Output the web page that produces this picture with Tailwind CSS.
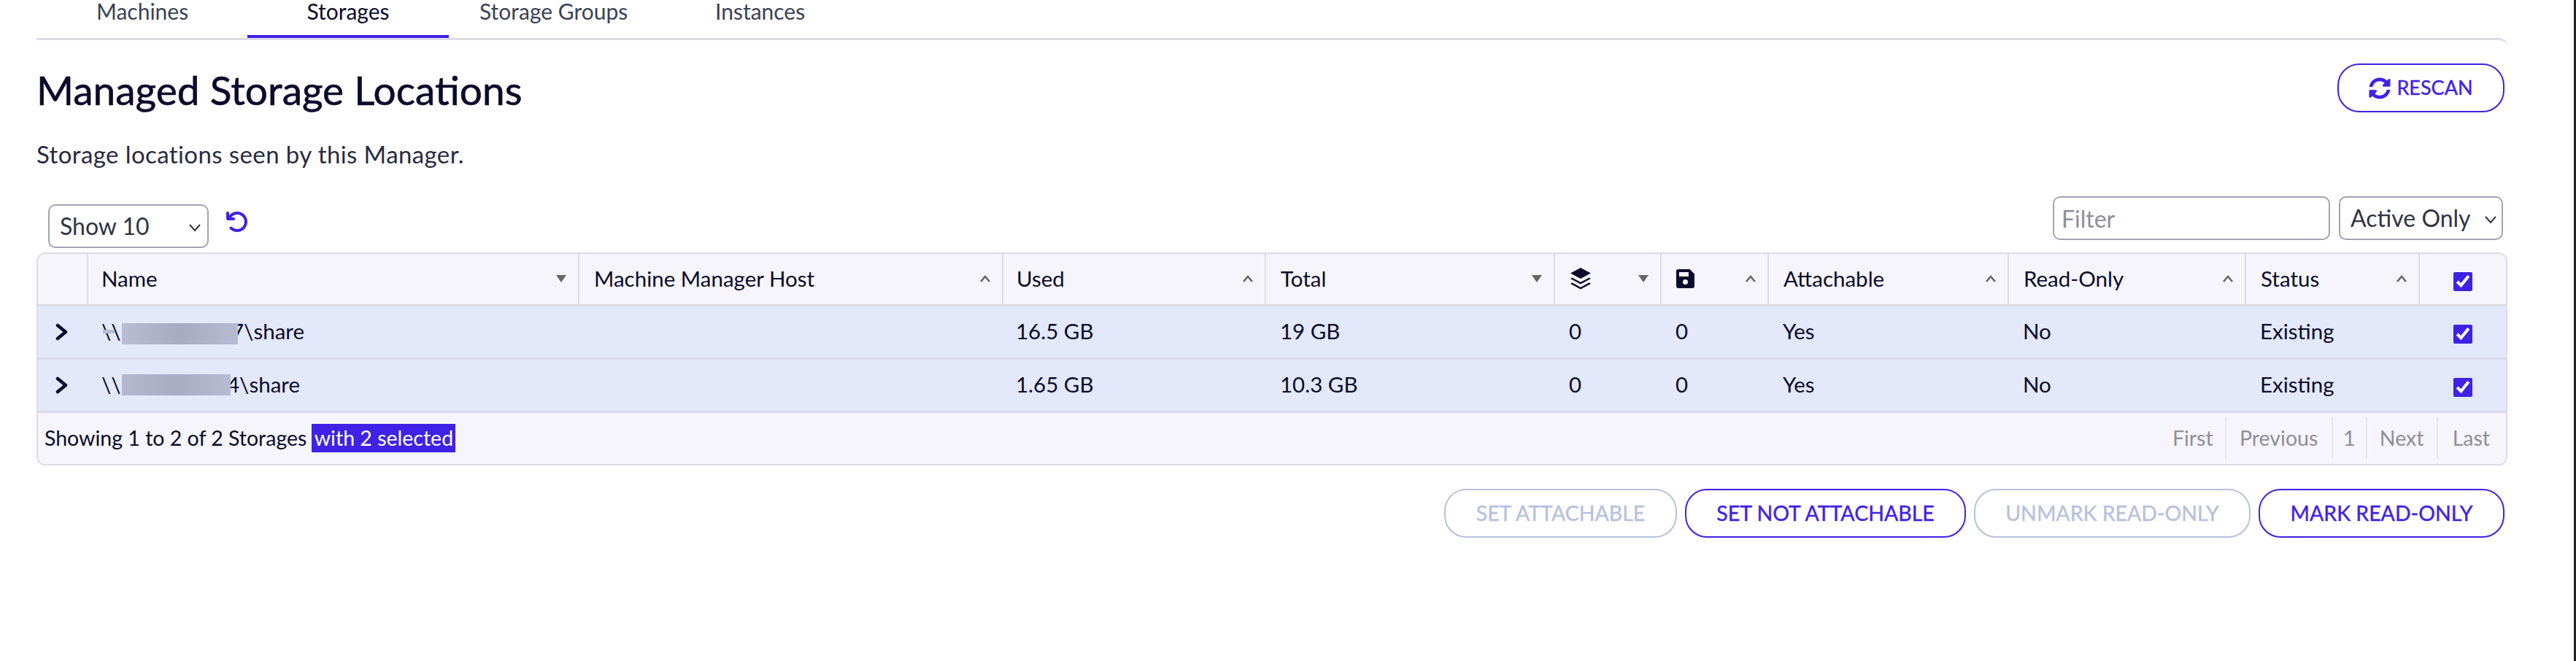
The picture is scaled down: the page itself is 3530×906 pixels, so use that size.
<!DOCTYPE html>
<html lang="en">

<head>
    <meta charset="UTF-8">
    <title>Storages</title>
    <script src="https://cdn.jsdelivr.net/npm/@tailwindcss/browser@4"></script>
</head>

<body class="bg-white text-[#0b0b2b] [font-family:Lato,sans-serif] overflow-hidden">
    <div class="h-[906px] w-[3530px] border-r-[3px] border-[#222] pl-[50px] pr-[91px]">
        <!-- tabs -->
        <nav class="flex h-[52px] text-[30px] leading-[30px] text-[#3a4256]">
            <a class="w-[150px] pl-[82px] whitespace-nowrap">Machines</a>
            <a class="ml-[139px] w-[276px] h-[52px] border-b-4 border-[#3f22e5] text-center text-[#0b0b2b] whitespace-nowrap">Storages</a>
            <a class="ml-[42px] w-[253px] whitespace-nowrap">Storage Groups</a>
            <a class="ml-[70px] whitespace-nowrap">Instances</a>
        </nav>

        <section class="rounded-tr-[12px] border-t-[3px] border-[#dcdce6]">
            <!-- title -->
            <div class="flex items-start justify-between pt-[32px]">
                <h1 class="text-[55px] leading-[72px] [-webkit-text-stroke:0.6px_currentColor]">Managed Storage Locations</h1>
                <button class="mr-[4px] flex h-[67px] w-[229px] items-center justify-center gap-[8px] rounded-[30px] border-2 border-[#3f22e5] text-[27px] text-[#3f22e5] [-webkit-text-stroke:0.4px_currentColor]">
                    <svg class="h-[30px] w-[30px]" viewBox="0 0 512 512" fill="currentColor"><path d="M370.7 133.3C339.5 104 298.9 88 255.8 88c-77.5.1-144.3 53.2-162.8 126.9-1.3 5.4-6.1 9.1-11.6 9.1H24.1c-7.5 0-13.2-6.8-11.8-14.2C33.9 94.9 134.8 8 256 8c66.4 0 126.8 26.1 171.3 68.7L463 41c15.1-15.1 41-4.4 41 17v134c0 13.3-10.7 24-24 24H346c-21.4 0-32.1-25.9-17-41zM32 296h134c21.4 0 32.1 25.9 17 41l-41.8 41.8c31.3 29.3 71.8 45.3 114.9 45.2 77.4-.1 144.3-53.1 162.8-126.8 1.3-5.4 6.1-9.1 11.6-9.1h57.3c7.5 0 13.2 6.8 11.8 14.2C478.1 417.1 377.2 504 256 504c-66.4 0-126.8-26.1-171.3-68.7L49 471c-15.1 15.1-41 4.4-41-17V320c0-13.3 10.7-24 24-24z"/></svg>
                    RESCAN
                </button>
            </div>
            <p class="mt-[33px] text-[33px] leading-[38px] tracking-[0.4px] text-[#2a2a44]">Storage locations seen by this Manager.</p>

            <!-- table controls -->
            <div class="flex items-start justify-between mt-[39px] h-[77px]">
                <div class="flex items-start pl-[16px] pt-[11px]">
                    <div class="relative flex h-[60px] w-[220px] items-center rounded-[10px] border-2 border-[#a3a3b2] pl-[14px] text-[32px] text-[#2f3545]">
                        Show 10
                        <svg class="absolute right-[8px] top-[24px] h-[12px] w-[18px]" viewBox="0 0 18 12" fill="none" stroke="#2f3545" stroke-width="2"><path d="M2 2l7 8 7-8"/></svg>
                    </div>
                    <svg class="ml-[23px] mt-[8px] h-[32px] w-[32px]" viewBox="0 0 512 512" fill="#3f22e5"><path d="M125.7 160H176c17.7 0 32 14.3 32 32s-14.3 32-32 32H48c-17.7 0-32-14.3-32-32V64c0-17.7 14.3-32 32-32s32 14.3 32 32v51.2l17.6-17.6c87.5-87.5 229.3-87.5 316.8 0s87.5 229.3 0 316.8-229.3 87.5-316.8 0c-12.5-12.5-12.5-32.8 0-45.3s32.8-12.5 45.3 0c62.5 62.5 163.8 62.5 226.3 0s62.5-163.8 0-226.3-163.8-62.5-226.3 0z"/></svg>
                </div>
                <div class="flex gap-[12px] pr-[6px]">
                    <input class="h-[60px] w-[380px] rounded-[10px] border-2 border-[#a3a3b2] px-[10px] text-[32px] placeholder:text-[#8e8e9a]" placeholder="Filter">
                    <div class="relative flex h-[60px] w-[225px] items-center rounded-[10px] border-2 border-[#a3a3b2] pl-[14px] text-[32px] text-[#2f3545] whitespace-nowrap">
                        Active Only
                        <svg class="absolute right-[6px] top-[24px] h-[12px] w-[18px]" viewBox="0 0 18 12" fill="none" stroke="#2f3545" stroke-width="2"><path d="M2 2l7 8 7-8"/></svg>
                    </div>
                </div>
            </div>

            <!-- storages table -->
            <div class="overflow-hidden rounded-[12px] border-2 border-[#dcdce6] text-[29.5px]">
                <table class="w-full table-fixed border-collapse">
                    <colgroup>
                        <col class="w-[68px]">
                        <col class="w-[673px]">
                        <col class="w-[581px]">
                        <col class="w-[360px]">
                        <col class="w-[396px]">
                        <col class="w-[146px]">
                        <col class="w-[147px]">
                        <col class="w-[329px]">
                        <col class="w-[325px]">
                        <col class="w-[238px]">
                        <col>
                    </colgroup>
                    <thead>
                        <tr class="h-[70px] bg-[#f5f5fb] text-left font-normal border-b-[3px] border-[#dcdce6]">
                            <th class="border-r-2 border-[#dcdce6]"></th>
                            <th class="relative border-r-2 border-[#dcdce6] pl-[18px] font-normal">Name
                                <svg class="absolute right-[16px] top-[29px] h-[10px] w-[14px]" viewBox="0 0 14 10" fill="#666"><path d="M0 0h14L7 10z"/></svg>
                            </th>
                            <th class="relative border-r-2 border-[#dcdce6] pl-[20px] font-normal">Machine Manager Host
                                <svg class="absolute right-[16px] top-[29px] h-[10px] w-[14px]" viewBox="0 0 14 10" fill="none" stroke="#666" stroke-width="2.5"><path d="M1 9l6-7 6 7"/></svg>
                            </th>
                            <th class="relative border-r-2 border-[#dcdce6] pl-[18px] font-normal">Used
                                <svg class="absolute right-[16px] top-[29px] h-[10px] w-[14px]" viewBox="0 0 14 10" fill="none" stroke="#666" stroke-width="2.5"><path d="M1 9l6-7 6 7"/></svg>
                            </th>
                            <th class="relative border-r-2 border-[#dcdce6] pl-[20px] font-normal">Total
                                <svg class="absolute right-[16px] top-[29px] h-[10px] w-[14px]" viewBox="0 0 14 10" fill="#666"><path d="M0 0h14L7 10z"/></svg>
                            </th>
                            <th class="relative border-r-2 border-[#dcdce6] pl-[20px] font-normal">
                                <svg class="h-[30px] w-[30px]" viewBox="0 0 28 28" fill="#0b0b2b"><path d="M14 0l13 7-13 7L1 7zM3 12.5l11 6 11-6 2 1.5-13 7-13-7zM3 19l11 6 11-6 2 1.5-13 7-13-7z"/></svg>
                                <svg class="absolute right-[16px] top-[29px] h-[10px] w-[14px]" viewBox="0 0 14 10" fill="#666"><path d="M0 0h14L7 10z"/></svg>
                            </th>
                            <th class="relative border-r-2 border-[#dcdce6] pl-[20px] font-normal">
                                <svg class="h-[26px] w-[25px]" viewBox="0 0 25 26" fill="#0b0b2b"><path fill-rule="evenodd" d="M3 0h15.5l6.5 6.5V23a3 3 0 0 1-3 3H3a3 3 0 0 1-3-3V3a3 3 0 0 1 3-3zM4 4v6h13V4zM12.5 14a3.5 3.5 0 1 0 0 7 3.5 3.5 0 0 0 0-7z"/></svg>
                                <svg class="absolute right-[16px] top-[29px] h-[10px] w-[14px]" viewBox="0 0 14 10" fill="none" stroke="#666" stroke-width="2.5"><path d="M1 9l6-7 6 7"/></svg>
                            </th>
                            <th class="relative border-r-2 border-[#dcdce6] pl-[20px] font-normal">Attachable
                                <svg class="absolute right-[16px] top-[29px] h-[10px] w-[14px]" viewBox="0 0 14 10" fill="none" stroke="#666" stroke-width="2.5"><path d="M1 9l6-7 6 7"/></svg>
                            </th>
                            <th class="relative border-r-2 border-[#dcdce6] pl-[20px] font-normal">Read-Only
                                <svg class="absolute right-[16px] top-[29px] h-[10px] w-[14px]" viewBox="0 0 14 10" fill="none" stroke="#666" stroke-width="2.5"><path d="M1 9l6-7 6 7"/></svg>
                            </th>
                            <th class="relative border-r-2 border-[#dcdce6] pl-[20px] font-normal">Status
                                <svg class="absolute right-[16px] top-[29px] h-[10px] w-[14px]" viewBox="0 0 14 10" fill="none" stroke="#666" stroke-width="2.5"><path d="M1 9l6-7 6 7"/></svg>
                            </th>
                            <th class="text-center"><input type="checkbox" checked class="h-[26px] w-[26px] accent-[#3f22e5] align-middle"></th>
                        </tr>
                    </thead>
                    <tbody>
                        <tr class="h-[73px] bg-[#e3e8fb] border-b-[3px] border-[#d9dbec]">
                            <td class="pl-[24px]"><svg class="h-[24px] w-[18px]" viewBox="0 0 18 24" fill="none" stroke="#0b0b2b" stroke-width="4.5" stroke-linecap="round" stroke-linejoin="round"><path d="M3 3l11 9L3 21"/></svg></td>
                            <td class="pl-[19px]">
                                <div class="relative flex items-center">
                                    <span class="w-[28px] flex-none whitespace-nowrap">\\1</span>
                                    <span class="relative z-10 mt-[6px] h-[29px] w-[159px] bg-gradient-to-r from-[#b9bdd3] via-[#a6abc2] to-[#b7bbd2]"></span>
                                    <span class="-ml-[9px]">7\share</span>
                                    <span class="absolute left-[2px] top-[20px] h-[5px] w-[16px] bg-[#b9bdd3]"></span>
                                </div>
                            </td>
                            <td></td>
                            <td class="pl-[18px]">16.5 GB</td>
                            <td class="pl-[20px]">19 GB</td>
                            <td class="pl-[20px]">0</td>
                            <td class="pl-[20px]">0</td>
                            <td class="pl-[20px]">Yes</td>
                            <td class="pl-[20px]">No</td>
                            <td class="pl-[20px]">Existing</td>
                            <td class="text-center"><input type="checkbox" checked class="h-[26px] w-[26px] accent-[#3f22e5] align-middle"></td>
                        </tr>
                        <tr class="h-[73px] bg-[#e3e8fb] border-b-[3px] border-[#d9dbec]">
                            <td class="pl-[24px]"><svg class="h-[24px] w-[18px]" viewBox="0 0 18 24" fill="none" stroke="#0b0b2b" stroke-width="4.5" stroke-linecap="round" stroke-linejoin="round"><path d="M3 3l11 9L3 21"/></svg></td>
                            <td class="pl-[19px]">
                                <div class="flex items-center">
                                    <span class="w-[28px] flex-none whitespace-nowrap">\\1</span>
                                    <span class="relative z-10 h-[29px] w-[149px] bg-gradient-to-r from-[#b4b8cf] via-[#a9adc4] to-[#b7bbd2]"></span>
                                    <span class="-ml-[5px]">4\share</span>
                                </div>
                            </td>
                            <td></td>
                            <td class="pl-[18px]">1.65 GB</td>
                            <td class="pl-[20px]">10.3 GB</td>
                            <td class="pl-[20px]">0</td>
                            <td class="pl-[20px]">0</td>
                            <td class="pl-[20px]">Yes</td>
                            <td class="pl-[20px]">No</td>
                            <td class="pl-[20px]">Existing</td>
                            <td class="text-center"><input type="checkbox" checked class="h-[26px] w-[26px] accent-[#3f22e5] align-middle"></td>
                        </tr>
                    </tbody>
                </table>
                <div class="flex h-[70px] items-center justify-between bg-[#f5f5fb] pl-[9px] pr-[22px] text-[28.5px]">
                    <div class="flex items-center">Showing 1 to 2 of 2 Storages<span class="ml-[7px] flex h-[39px] w-[197px] items-center justify-center bg-[#3f22e5] text-white">with 2 selected</span></div>
                    <div class="flex h-[57px] items-center text-[#8f8f98]">
                        <span class="flex h-full items-center border-r-2 border-[#e6e6ee] pr-[16px]">First</span>
                        <span class="flex h-full w-[146px] items-center justify-center border-r-2 border-[#e6e6ee]">Previous</span>
                        <span class="flex h-full w-[47px] items-center justify-center border-r-2 border-[#e6e6ee]">1</span>
                        <span class="flex h-full w-[97px] items-center justify-center border-r-2 border-[#e6e6ee]">Next</span>
                        <span class="flex h-full items-center pl-[20px]">Last</span>
                    </div>
                </div>
            </div>

            <!-- bulk actions -->
            <div class="mt-[32px] flex justify-end gap-[11px] pr-[4px] text-[28.5px] [-webkit-text-stroke:0.4px_currentColor]">
                <button class="h-[67px] w-[319px] rounded-[30px] border-2 border-[#b7c2dd] text-[#b7c2dd]">SET ATTACHABLE</button>
                <button class="h-[67px] w-[385px] rounded-[30px] border-2 border-[#3f22e5] text-[#3f22e5]">SET NOT ATTACHABLE</button>
                <button class="h-[67px] w-[379px] rounded-[30px] border-2 border-[#b7c2dd] text-[#b7c2dd]">UNMARK READ-ONLY</button>
                <button class="h-[67px] w-[337px] rounded-[30px] border-2 border-[#3f22e5] text-[#3f22e5]">MARK READ-ONLY</button>
            </div>
        </section>
    </div>
</body>

</html>
